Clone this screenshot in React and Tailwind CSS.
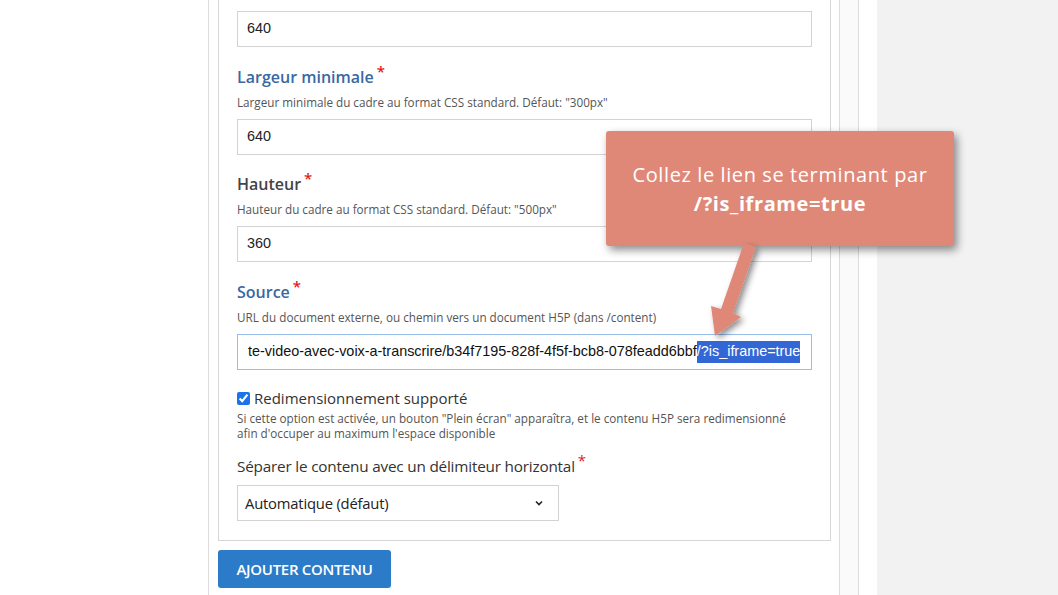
import React from 'react';

const Req = () => <span className="ml-[3px] text-[#e01b1b] text-[15px] leading-none relative top-[-6px]">*</span>;

const FieldText = ({ label, desc, value, blue = true, gap = 'mt-[18px]' }) => (
    <div>
        <div className={`${gap} h-[22px] flex items-center text-[16px] font-semibold ${blue ? 'text-[#3a68a0]' : 'text-[#444]'}`}>
            {label}
            <Req />
        </div>
        <div className="mt-[6px] h-[16px] leading-[16px] text-[11.7px] text-[#555]">{desc}</div>
        <div className="mt-[9px] h-[36px] border border-[#d3d3d3] bg-white px-[9px] flex items-center text-[14.4px] text-[#222] font-['Liberation_Sans',Arial,sans-serif]">
            {value}
        </div>
    </div>
);

export default function App() {
    return (
        <div className="relative w-[1058px] h-[595px] overflow-hidden bg-white flex font-['Open_Sans',sans-serif] text-[#333]">
            <div className="w-[208px] shrink-0 bg-white" />

            {/* colonne principale */}
            <div className="w-[651px] shrink-0 border-l border-r border-[#dcdcdc] flex">
                <div className="flex-1 pl-[9px] pr-[8px]">
                    <section className="w-[613px] border-x border-b border-[#d6d6d6] bg-white px-[18px] pt-[11px] pb-[19px]">
                        <div className="h-[36px] border border-[#d3d3d3] bg-white px-[9px] flex items-center text-[14.4px] text-[#222] font-['Liberation_Sans',Arial,sans-serif]">
                            640
                        </div>

                        <FieldText
                            label="Largeur minimale"
                            desc={'Largeur minimale du cadre au format CSS standard. Défaut: "300px"'}
                            value="640"
                            gap="mt-[19px]"
                        />
                        <FieldText
                            label="Hauteur"
                            desc={'Hauteur du cadre au format CSS standard. Défaut: "500px"'}
                            value="360"
                            blue={false}
                        />

                        <div>
                            <div className="mt-[19px] h-[22px] flex items-center text-[16px] font-semibold text-[#3a68a0]">
                                Source
                                <Req />
                            </div>
                            <div className="mt-[6px] h-[16px] leading-[16px] text-[11.7px] text-[#555]">
                                URL du document externe, ou chemin vers un document H5P (dans /content)
                            </div>
                            <div className="mt-[9px] h-[36px] border border-[#97bde8] bg-white pl-[10px] flex items-center text-[14.4px] text-[#111] whitespace-nowrap overflow-hidden font-['Liberation_Sans',Arial,sans-serif]">
                                <span>te-video-avec-voix-a-transcrire/b34f7195-828f-4f5f-bcb8-078feadd6bbf</span>
                                <span className="bg-[#3467d6] text-white">/?is_iframe=true</span>
                            </div>
                        </div>

                        <label className="mt-[17px] h-[22px] flex items-center gap-[4px] text-[15px] text-[#333]">
                            <input type="checkbox" defaultChecked className="w-[13px] h-[13px] m-0 accent-[#1a73e8]" />
                            <span className="font-medium">Redimensionnement supporté</span>
                        </label>
                        <div className="mt-[2px] text-[11.7px] leading-[15px] text-[#555]">
                            Si cette option est activée, un bouton "Plein écran" apparaîtra, et le contenu H5P sera redimensionné
                            <br />
                            afin d'occuper au maximum l'espace disponible
                        </div>

                        <div className="mt-[15px] h-[20px] flex items-center text-[15.3px] text-[#333] tracking-[-0.2px]">
                            Séparer le contenu avec un délimiteur horizontal
                            <Req />
                        </div>
                        <div className="mt-[9px] w-[322px] h-[36px] border border-[#d3d3d3] bg-white pl-[7px] pr-[14px] flex items-center justify-between text-[14.8px] text-[#222] tracking-[-0.2px]">
                            <span>Automatique (défaut)</span>
                            <svg width="10" height="10" viewBox="0 0 10 10" fill="none">
                                <path d="M2 3.5 L5 6.5 L8 3.5" stroke="#222" strokeWidth="1.6" />
                            </svg>
                        </div>
                    </section>

                    <button className="mt-[9px] w-[173px] h-[38px] rounded-[3px] bg-[#2b7bc9] text-white text-[15px] font-semibold tracking-[-0.3px] text-center">
                        AJOUTER CONTENU
                    </button>
                </div>
                <div className="w-[19px] shrink-0 border-l border-[#dcdcdc] bg-[#fafafa]" />
            </div>

            <div className="w-[18px] shrink-0 bg-white" />
            <div className="flex-1 bg-[#f2f2f2]" />

            {/* bulle d'annotation */}
            <div className="absolute left-[606px] top-[131px] w-[348px] h-[115px] bg-[#e08878] rounded-[3px] shadow-[3px_4px_8px_rgba(0,0,0,0.45)] flex flex-col items-center justify-center text-white text-[20px] leading-[29px] tracking-[0.6px] font-['Open_Sans',sans-serif]">
                <div>Collez le lien se terminant par</div>
                <div className="font-bold">/?is_iframe=true</div>
            </div>
            <svg className="absolute left-0 top-0 pointer-events-none" width="1058" height="595" viewBox="0 0 1058 595">
                <defs>
                    <filter id="sh" x="-50%" y="-50%" width="200%" height="200%">
                        <feDropShadow dx="3" dy="3" stdDeviation="3" floodColor="#000" floodOpacity="0.45" />
                    </filter>
                </defs>
                <polygon
                    points="744,243 756,247 733,313 741,317 715,336 711,306 721,309"
                    fill="#e08878"
                    filter="url(#sh)"
                />
            </svg>
        </div>
    );
}
